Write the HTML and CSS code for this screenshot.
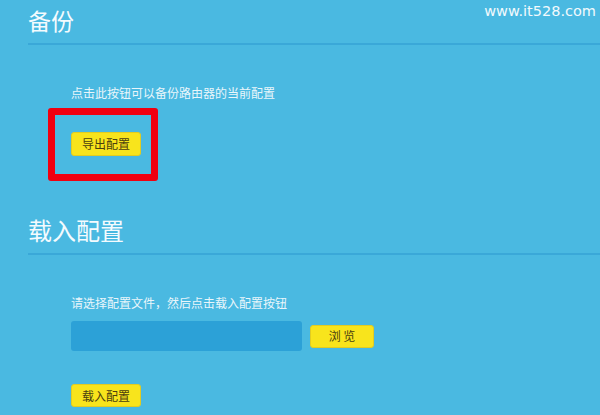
FILE: index.html
```html
<!DOCTYPE html>
<html lang="zh-CN">
<head>
  <meta charset="UTF-8">
  <title>备份与载入配置</title>
  <link rel="stylesheet" href="styles.css">
</head>
<body>
  <div class="watermark">www.it528.com</div>

  <div class="section">
    <h2 class="section-title">备份</h2>
    <div class="section-body">
      <p class="hint">点击此按钮可以备份路由器的当前配置</p>
      <div class="highlight">
        <button type="button" class="btn btn-export">导出配置</button>
      </div>
    </div>
  </div>

  <div class="section section-load">
    <h2 class="section-title">载入配置</h2>
    <div class="section-body">
      <p class="hint hint-load">请选择配置文件，然后点击载入配置按钮</p>
      <div class="file-row">
        <input type="text" class="file-input">
        <button type="button" class="btn btn-browse">浏 览</button>
      </div>
      <button type="button" class="btn btn-load">载入配置</button>
    </div>
  </div>
</body>
</html>
```

FILE: styles.css
```css
body {
  margin: 0;
  background-color: #4ab9e1;
  font-family: "Noto Sans CJK SC", "Noto Sans", sans-serif;
  height: 415px;
  overflow: hidden;
}
.watermark {
  position: absolute;
  top: 3px;
  right: 4px;
  font-family: "DejaVu Sans", sans-serif;
  font-size: 14.5px;
  color: #f2fafd;
}
.section-title {
  margin: 0 0 0 28px;
  padding: 4px 0 7px;
  font-size: 23px;
  line-height: 32px;
  font-weight: normal;
  color: #f4fbfe;
  border-bottom: 2px solid #3aa8d8;
}
.section-load .section-title {
  font-size: 24px;
}
.section-body {
  padding-left: 71px;
}
.hint {
  margin: 40px 0 7px;
  font-size: 12px;
  line-height: 16px;
  color: #e9f6fb;
}
.hint-load {
  margin-bottom: 10px;
}
.highlight {
  display: inline-block;
  margin-left: -23px;
  padding: 17px 10px 18px 16px;
  border: 7px solid #f00010;
  border-radius: 3px;
}
.btn {
  display: block;
  box-sizing: border-box;
  width: 70px;
  height: 24px;
  padding: 0;
  background-color: #f8e41c;
  border: 1px solid #e2cc20;
  border-radius: 3px;
  font-family: "Noto Sans CJK SC", sans-serif;
  font-size: 12px;
  line-height: 20px;
  text-align: center;
  white-space: nowrap;
  color: #4a3f10;
  cursor: pointer;
}
.section-load {
  margin-top: 29px;
}
.file-row {
  display: flex;
  align-items: center;
  gap: 8px;
}
.file-input {
  width: 231px;
  height: 30px;
  box-sizing: border-box;
  background-color: #2ca1d7;
  border: none;
  border-radius: 3px;
}
.btn-browse {
  width: 64px;
  height: 23px;
}
.btn-load {
  margin-top: 33px;
  height: 23px;
}
```
